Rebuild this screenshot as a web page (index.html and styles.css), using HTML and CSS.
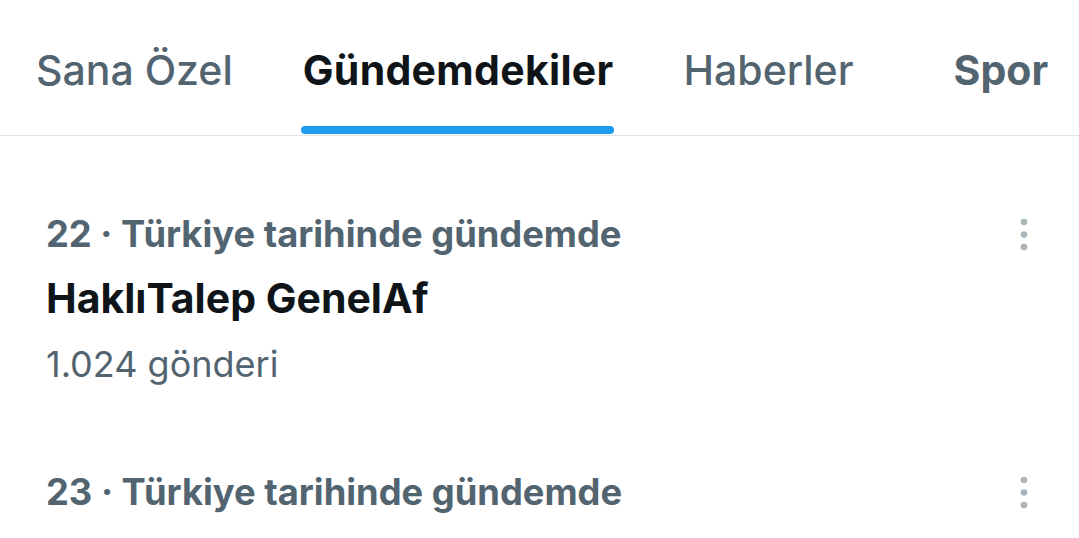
FILE: index.html
```html
<!DOCTYPE html>
<html lang="tr">
<head>
<meta charset="utf-8">
<title>Gündemdekiler</title>
<link rel="stylesheet" href="styles.css">
</head>
<body>
<nav class="tabs">
  <div class="tab"><span class="tab-label">Sana Özel</span></div>
  <div class="tab active"><span class="tab-label">Gündemdekiler</span><span class="tab-bar"></span></div>
  <div class="tab"><span class="tab-label">Haberler</span></div>
  <div class="tab last"><span class="tab-label">Spor</span></div>
</nav>
<main class="list">
  <section class="trend">
    <div class="trend-body">
      <div class="trend-meta">22 · Türkiye tarihinde gündemde</div>
      <div class="trend-title">HaklıTalep GenelAf</div>
      <div class="trend-count">1.024 gönderi</div>
    </div>
    <div class="more">
      <svg width="14" height="40" viewBox="0 0 14 40"><circle cx="7" cy="7" r="3.3"/><circle cx="7" cy="19.5" r="3.3"/><circle cx="7" cy="32" r="3.3"/></svg>
    </div>
  </section>
  <section class="trend">
    <div class="trend-body">
      <div class="trend-meta">23 · Türkiye tarihinde gündemde</div>
    </div>
    <div class="more">
      <svg width="14" height="40" viewBox="0 0 14 40"><circle cx="7" cy="7" r="3.3"/><circle cx="7" cy="19.5" r="3.3"/><circle cx="7" cy="32" r="3.3"/></svg>
    </div>
  </section>
</main>
</body>
</html>
```
FILE: styles.css
```css
html, body {
  margin: 0;
  padding: 0;
  background: #ffffff;
  overflow: hidden;
}
body {
  font-family: "Inter", "Roboto", sans-serif;
  width: 1079px;
  height: 538px;
}
.tabs {
  display: flex;
  height: 135px;
  border-bottom: 1px solid #dde4e7;
  padding-left: 36px;
  gap: 70px;
  white-space: nowrap;
}
.tab {
  display: flex;
  flex-direction: column;
  align-items: stretch;
  padding-top: 46px;
}
.tab.last {
  margin-left: 30px;
}
.tab-label {
  font-size: 41px;
  line-height: 48px;
  font-weight: 500;
  color: #536471;
}
.tab.active .tab-label {
  font-weight: 700;
  color: #0f1419;
  letter-spacing: 0.3px;
}
.tab.last .tab-label {
  font-weight: 700;
}
.tab-bar {
  margin-top: auto;
  margin-bottom: 1px;
  margin-left: -2px;
  height: 8px;
  border-radius: 4px;
  background: #1d9bf0;
}
.list {
  padding-top: 34px;
}
.trend {
  display: flex;
  padding: 40px 48px 40px 46px;
}
.trend-body {
  flex: 1;
}
.trend-meta {
  font-size: 36.3px;
  line-height: 48px;
  font-weight: 700;
  color: #536471;
}
.trend-title {
  margin-top: 14px;
  font-size: 41px;
  line-height: 52px;
  font-weight: 700;
  color: #0f1419;
}
.trend-count {
  margin-top: 16px;
  font-size: 36px;
  line-height: 48px;
  font-weight: 400;
  color: #536471;
}
.more {
  padding-top: 5px;
}
.more svg {
  display: block;
  fill: #aab4bb;
}
```
